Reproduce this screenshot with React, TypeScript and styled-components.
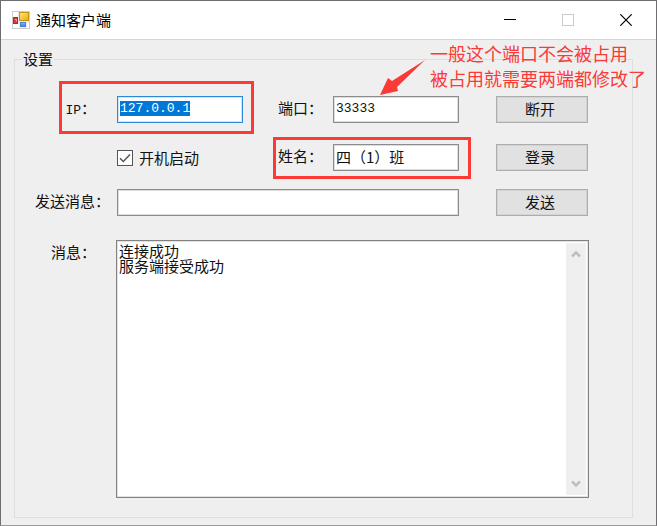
import React, { useEffect, useRef } from "react";
import styled, { createGlobalStyle } from "styled-components";

const cjk = `"Noto Sans CJK SC", sans-serif`;
const ink = "#111111";
const face = "#efefef";
const marker = "#fb3a38";

const GlobalStyle = createGlobalStyle`
  *, *::before, *::after { box-sizing: border-box; }
  body { margin: 0; background: ${face}; }
  button, input, textarea { font: inherit; color: inherit; margin: 0; }
`;

const Window = styled.div`
  position: relative;
  display: flex;
  flex-direction: column;
  min-height: 100vh;
  background: ${face};
  border: 1px solid #6f6d70;
  border-bottom-color: #9b9b9b;
  color: ${ink};
  font: 15px/20px ${cjk};
`;

const TitleBar = styled.header`
  display: flex;
  align-items: center;
  height: 39px;
  padding: 0 1px 0 11px;
  background: #ffffff;
  border-bottom: 1px solid #d6d6d6;
`;

const Title = styled.h1`
  flex: 1;
  margin: 0 0 0 6px;
  color: #000000;
  font-size: 15px;
  font-weight: 400;
`;

const CaptionButton = styled.button<{ $muted?: boolean }>`
  display: flex;
  align-items: center;
  justify-content: center;
  width: 58px;
  height: 38px;
  padding: 0;
  border: 0;
  background: transparent;
  color: ${(p) => (p.$muted ? "#cccccc" : "#000000")};
`;

const Group = styled.fieldset`
  flex: 1;
  min-width: 0;
  margin: 9px 23px 7px 13px;
  padding: 27px 44px 18px 0;
  border: 1px solid #dedede;
`;

const Legend = styled.legend`
  margin-left: 7px;
  padding: 0 1px;
`;

const Form = styled.form`
  position: relative;
  display: grid;
  grid-template-columns: 102px minmax(0, 1fr) 90px minmax(0, 1fr) 37px 92px;
  grid-template-rows: 48px 45px 51px minmax(258px, 1fr);
  align-items: start;
`;

const Label = styled.label<{ $end: number }>`
  padding: 2px ${(p) => p.$end}px 0 0;
  text-align: right;
  white-space: nowrap;
`;

const Latin = styled.span`
  font: 13px/20px "Liberation Mono", monospace;
`;

const TextBox = styled.input<{ $mono?: boolean; $active?: boolean; $wide?: boolean }>`
  grid-column: ${(p) => (p.$wide ? "2 / 5" : "auto")};
  width: 100%;
  height: 27px;
  padding: 0 2px 3px;
  border: 1px solid ${(p) => (p.$active ? "#2b88d8" : "#8c8c8c")};
  box-shadow: inset 0 0 0 1px ${(p) => (p.$active ? "#d3e6f7" : "#dddddd")};
  border-radius: 0;
  outline: 0;
  background: #ffffff;
  font-family: ${(p) => (p.$mono ? `"Liberation Mono", monospace` : cjk)};
  font-size: ${(p) => (p.$mono ? 13 : 15)}px;
  line-height: 15px;

  &::selection {
    background: #0078d7;
    color: #ffffff;
  }
`;

const PushButton = styled.button`
  grid-column: 6;
  height: 27px;
  padding: 0 4px 1px 0;
  border: 1px solid #adadad;
  box-shadow: inset 0 0 0 1px #d4d4d4;
  background: #e1e1e1;
  line-height: 20px;
`;

const CheckLabel = styled.label`
  grid-column: 2;
  display: flex;
  align-items: center;
  gap: 6px;
  padding-top: 4px;
  white-space: nowrap;
`;

const CheckFrame = styled.span`
  display: grid;
  width: 16px;
  height: 16px;

  & > * { grid-area: 1 / 1; }
  & > svg { pointer-events: none; opacity: 0; z-index: 1; }
  & > input:checked + svg { opacity: 1; }
`;

const CheckBox = styled.input`
  appearance: none;
  width: 16px;
  height: 16px;
  border: 1px solid #555555;
  background: #ffffff;
`;

const LogFrame = styled.div`
  grid-column: 2 / 7;
  display: flex;
  align-self: stretch;
  margin-left: -1px;
  margin-right: -1px;
  padding: 2px;
  border: 1px solid #828282;
  box-shadow: inset 0 0 0 1px #e2e2e2;
  background: #ffffff;
`;

const Log = styled.textarea`
  flex: 1;
  min-width: 0;
  padding: 0;
  border: 0;
  outline: 0;
  resize: none;
  overflow: hidden;
  background: transparent;
  line-height: 15px;
`;

const ScrollTrack = styled.div`
  display: flex;
  flex-direction: column;
  justify-content: space-between;
  width: 20px;
  background: ${face};
`;

const ScrollButton = styled.button`
  display: flex;
  align-items: center;
  justify-content: center;
  height: 22px;
  padding: 0;
  border: 0;
  background: transparent;
`;

const Highlight = styled.div<{ $target: "ip" | "name" }>`
  position: absolute;
  grid-area: ${(p) => (p.$target === "ip" ? "1 / 1 / 2 / 3" : "2 / 3 / 3 / 5")};
  inset: ${(p) => (p.$target === "ip" ? "-15px -11px 10px 44px" : "-7px -12px 10px 30px")};
  border: 3px solid ${marker};
  pointer-events: none;
`;

const Note = styled.aside`
  position: absolute;
  top: 40px;
  right: 10px;
  display: flex;
  align-items: flex-start;
  gap: 5px;
  color: ${marker};
  font-size: 18px;
  line-height: 25px;
  white-space: nowrap;
  pointer-events: none;

  & > svg { margin-top: 19px; }
`;

const NoteText = styled.p`
  margin: 0;
`;

function AppIcon() {
  return (
    <svg width="18" height="18" viewBox="0 0 18 18" aria-hidden="true">
      <defs>
        <linearGradient id="gold" x1="0" y1="0" x2="1" y2="1">
          <stop offset="0" stopColor="#ffe98a" />
          <stop offset="1" stopColor="#eba900" />
        </linearGradient>
        <linearGradient id="azure" x1="0" y1="0" x2="0" y2="1">
          <stop offset="0" stopColor="#8fbcff" />
          <stop offset="1" stopColor="#2f74df" />
        </linearGradient>
      </defs>
      <rect x="0.5" y="0.5" width="17" height="17" fill="#e9e9e9" stroke="#cdcdcd" />
      <path d="M1 1h5v5H1z M1 13h6v4H1z M15 12h2v5h-2z" fill="#fff" />
      <rect x="7.5" y="1.5" width="9" height="8" fill="url(#gold)" stroke="#c9940f" />
      <rect x="1.5" y="6.5" width="4" height="6" fill="#d33f3f" stroke="#b3262b" />
      <path d="M3 8.5h1.5v2" fill="none" stroke="#f49a92" />
      <rect x="8.5" y="11.5" width="5" height="4" fill="url(#azure)" stroke="#4c84d8" />
    </svg>
  );
}

function Chevron({ up }: { up?: boolean }) {
  return (
    <svg width="10" height="8" viewBox="0 0 10 8" aria-hidden="true">
      <path d={up ? "M1 6.5 5 2.5 9 6.5" : "M1 1.5 5 5.5 9 1.5"} fill="none" stroke="#bfbfbf" strokeWidth="2.6" />
    </svg>
  );
}

export default function App() {
  const ip = useRef<HTMLInputElement>(null);

  useEffect(() => {
    ip.current?.focus();
    ip.current?.select();
  }, []);

  return (
    <>
      <GlobalStyle />
      <Window>
        <TitleBar>
          <AppIcon />
          <Title>通知客户端</Title>
          <CaptionButton aria-label="最小化">
            <svg width="12" height="12" viewBox="0 0 12 12"><path d="M0 5.5h12" stroke="currentColor" /></svg>
          </CaptionButton>
          <CaptionButton aria-label="最大化" $muted disabled>
            <svg width="12" height="12" viewBox="0 0 12 12"><rect x="0.5" y="0.5" width="11" height="11" fill="none" stroke="currentColor" /></svg>
          </CaptionButton>
          <CaptionButton aria-label="关闭">
            <svg width="12" height="12" viewBox="0 0 12 12"><path d="M0.3 0.3 11.7 11.7M11.7 0.3 0.3 11.7" stroke="currentColor" strokeWidth="1.2" /></svg>
          </CaptionButton>
        </TitleBar>

        <Group>
          <Legend>设置</Legend>
          <Form onSubmit={(e) => e.preventDefault()}>
            <Label htmlFor="ip" $end={21}><Latin>IP</Latin>：</Label>
            <TextBox id="ip" ref={ip} defaultValue="127.0.0.1" $mono $active />
            <Label htmlFor="port" $end={10}>端口：</Label>
            <TextBox id="port" defaultValue="33333" $mono />
            <PushButton type="button">断开</PushButton>

            <CheckLabel>
              <CheckFrame>
                <CheckBox type="checkbox" defaultChecked />
                <svg width="16" height="16" viewBox="0 0 16 16" aria-hidden="true">
                  <path d="M3 8.2 6.3 11.5 13 4.5" fill="none" stroke="#555555" strokeWidth="1.5" />
                </svg>
              </CheckFrame>
              开机启动
            </CheckLabel>
            <Label htmlFor="name" $end={10}>姓名：</Label>
            <TextBox id="name" defaultValue="四（1）班" />
            <PushButton type="button">登录</PushButton>

            <Label htmlFor="message" $end={7}>发送消息：</Label>
            <TextBox id="message" $wide />
            <PushButton type="submit">发送</PushButton>

            <Label htmlFor="log" $end={21}>消息：</Label>
            <LogFrame>
              <Log id="log" readOnly value={"连接成功\n服务端接受成功"} />
              <ScrollTrack>
                <ScrollButton type="button" aria-label="向上滚动"><Chevron up /></ScrollButton>
                <ScrollButton type="button" aria-label="向下滚动"><Chevron /></ScrollButton>
              </ScrollTrack>
            </LogFrame>

            <Highlight $target="ip" />
            <Highlight $target="name" />
          </Form>
        </Group>

        <Note>
          <svg width="46" height="36" viewBox="0 0 46 36" aria-hidden="true">
            <path d="M46 0 18 27 19 31 1 35 9 18 13 21Z" fill={marker} />
          </svg>
          <NoteText>
            一般这个端口不会被占用
            <br />
            被占用就需要两端都修改了
          </NoteText>
        </Note>
      </Window>
    </>
  );
}
